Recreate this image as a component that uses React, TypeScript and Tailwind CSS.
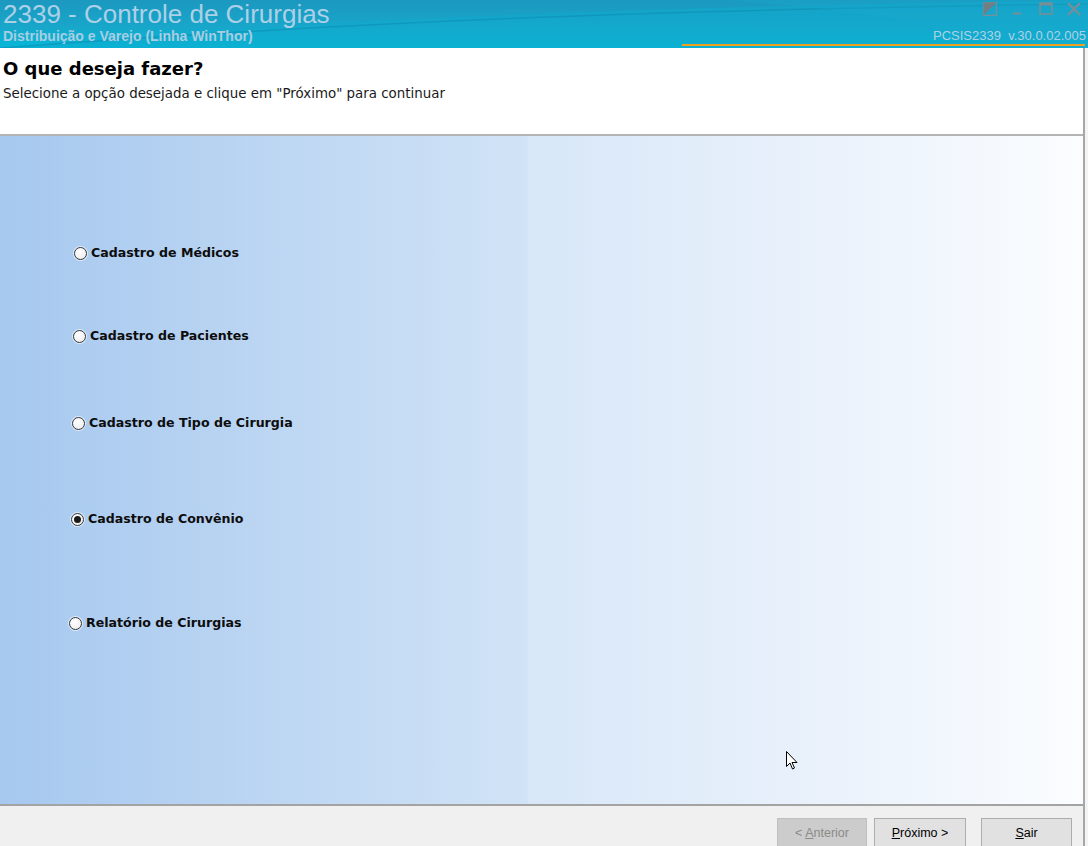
import React, { useState } from "react";

const options = [
  { label: "Cadastro de Médicos", pl: "pl-[74px]", mt: "mt-[109px]" },
  { label: "Cadastro de Pacientes", pl: "pl-[73px]", mt: "mt-[67px]" },
  { label: "Cadastro de Tipo de Cirurgia", pl: "pl-[72px]", mt: "mt-[71px]" },
  { label: "Cadastro de Convênio", pl: "pl-[71px]", mt: "mt-[80px]" },
  { label: "Relatório de Cirurgias", pl: "pl-[69px]", mt: "mt-[88px]" },
];

function Radio({ checked }: { checked: boolean }) {
  return (
    <span className="relative flex h-[13px] w-[13px] shrink-0 items-center justify-center rounded-full border border-[#3c3c3c] bg-[radial-gradient(circle_at_40%_35%,#ffffff,#e9e9e9)] shadow-[0_0_0_1px_rgba(255,255,255,0.6)]">
      {checked && <span className="h-[7px] w-[7px] rounded-full bg-[#1a1a1a]" />}
    </span>
  );
}

function TitleBar() {
  return (
    <div className="relative h-[48px] w-full overflow-hidden bg-[linear-gradient(180deg,#1c98bf_0%,#18a6ca_55%,#05b8d8_100%)]">
      <svg className="absolute inset-0" width="1088" height="48" viewBox="0 0 1088 48" preserveAspectRatio="none">
        <path d="M0 48 C 300 20, 600 8, 1088 0 L1088 48 Z" fill="#10acce" opacity="0.55" />
        <path d="M0 48 C 350 22, 650 10, 1088 4" stroke="#0a86ad" strokeWidth="1.5" fill="none" opacity="0.45" />
        <path d="M720 0 C 880 10, 960 30, 1000 48 L1088 48 L1088 0 Z" fill="#19a9cf" opacity="0.35" />
      </svg>
      <div className="relative flex h-full flex-col pl-[3px]">
        <div className="font-['Liberation_Sans',Arial,sans-serif] text-[26px] leading-[28px] text-[#acd0e6]">
          2339 - Controle de Cirurgias
        </div>
        <div className="font-['Liberation_Sans',Arial,sans-serif] text-[14px] font-bold leading-[17px] text-[#a9cde2]">
          Distribuição e Varejo (Linha WinThor)
        </div>
      </div>
      {/* window buttons */}
      <div className="absolute right-[7px] top-[2px] flex items-center gap-[14px]">
        <svg width="14" height="14" viewBox="0 0 14 14">
          <rect x="0.5" y="0.5" width="13" height="13" fill="none" stroke="#7a8e96" strokeWidth="1.5" />
          <path d="M0.5 13.5 L13.5 0.5 L0.5 0.5 Z" fill="#6e7f86" />
        </svg>
        <svg width="14" height="14" viewBox="0 0 14 14">
          <rect x="2" y="10.5" width="8" height="2" fill="#7a8e96" />
        </svg>
        <svg width="14" height="14" viewBox="0 0 14 14">
          <rect x="1" y="1" width="12" height="11" fill="none" stroke="#7a8e96" strokeWidth="1.5" />
          <rect x="1" y="1" width="12" height="2.5" fill="#7a8e96" />
        </svg>
        <svg width="14" height="14" viewBox="0 0 14 14">
          <path d="M1 1 L13 13 M13 1 L1 13" stroke="#7a8e96" strokeWidth="2" />
        </svg>
      </div>
      <div className="absolute right-[2px] top-[28px] font-['Liberation_Sans',Arial,sans-serif] text-[13px] leading-[15px] text-[#aed2e4]">
        PCSIS2339&nbsp; v.30.0.02.005
      </div>
      <div className="absolute bottom-[2px] left-[682px] right-[3px] h-[2px] bg-[#f0a01e]" />
    </div>
  );
}

export default function App() {
  const [selected, setSelected] = useState(3);
  return (
    <div className="relative h-[846px] w-[1088px] overflow-hidden bg-white font-['Liberation_Sans',Arial,sans-serif]">
      <TitleBar />
      <div className="flex h-[798px]">
        <div className="flex w-[1085px] flex-col border-r-2 border-[#a7a7a7]">
          {/* header */}
          <div className="h-[88px] shrink-0 border-b-2 border-[#b4b4b4] bg-white pl-[3px] pt-[10px]">
            <div className="font-['DejaVu_Sans',sans-serif] text-[18px] font-bold leading-[22px] text-black">
              O que deseja fazer?
            </div>
            <div className="mt-[6px] font-['DejaVu_Sans',sans-serif] text-[13.4px] leading-[15px] text-[#1a1a1a]">
              Selecione a opção desejada e clique em "Próximo" para continuar
            </div>
          </div>
          {/* options panel */}
          <div className="flex h-[668px] shrink-0 flex-col bg-[linear-gradient(90deg,#a6c8ef_0%,#d1e3f6_48.7%,#d7e7f8_48.8%,#e9f1fb_75%,#fbfdff_100%)]">
            {options.map((o, i) => (
              <label
                key={o.label}
                className={`flex h-[16px] cursor-default items-center gap-[4px] ${o.pl} ${o.mt}`}
                onClick={() => setSelected(i)}
              >
                <Radio checked={selected === i} />
                <span className="font-['DejaVu_Sans',sans-serif] text-[12.6px] font-bold leading-[16px] text-[#0d0d0d]">
                  {o.label}
                </span>
              </label>
            ))}
          </div>
          {/* footer */}
          <div className="flex flex-1 items-start justify-end border-t-2 border-[#a3a3a3] bg-[#f0f0f0] pr-[11px] pt-[12px]">
            <button className="mr-[7px] h-[30px] w-[90px] border border-[#bfbfbf] bg-[#cccccc] text-[12.5px] text-[#8a8a8a]">
              &lt; <span className="underline">A</span>nterior
            </button>
            <button className="mr-[15px] h-[30px] w-[92px] border border-[#adadad] bg-[#e1e1e1] text-[12.5px] text-black">
              <span className="underline">P</span>róximo &gt;
            </button>
            <button className="h-[30px] w-[91px] border border-[#adadad] bg-[#e1e1e1] text-[12.5px] text-black">
              <span className="underline">S</span>air
            </button>
          </div>
        </div>
        <div className="flex-1 bg-[#f4f4f4]" />
      </div>
      {/* mouse pointer */}
      <svg className="absolute left-[786px] top-[751px]" width="12" height="19" viewBox="0 0 12 19">
        <path d="M0.5 0.5 L0.5 15.5 L4 12 L6.5 18 L8.5 17 L6 11.5 L11 11.5 Z" fill="#ffffff" stroke="#000000" strokeWidth="1" strokeLinejoin="miter" />
      </svg>
    </div>
  );
}
